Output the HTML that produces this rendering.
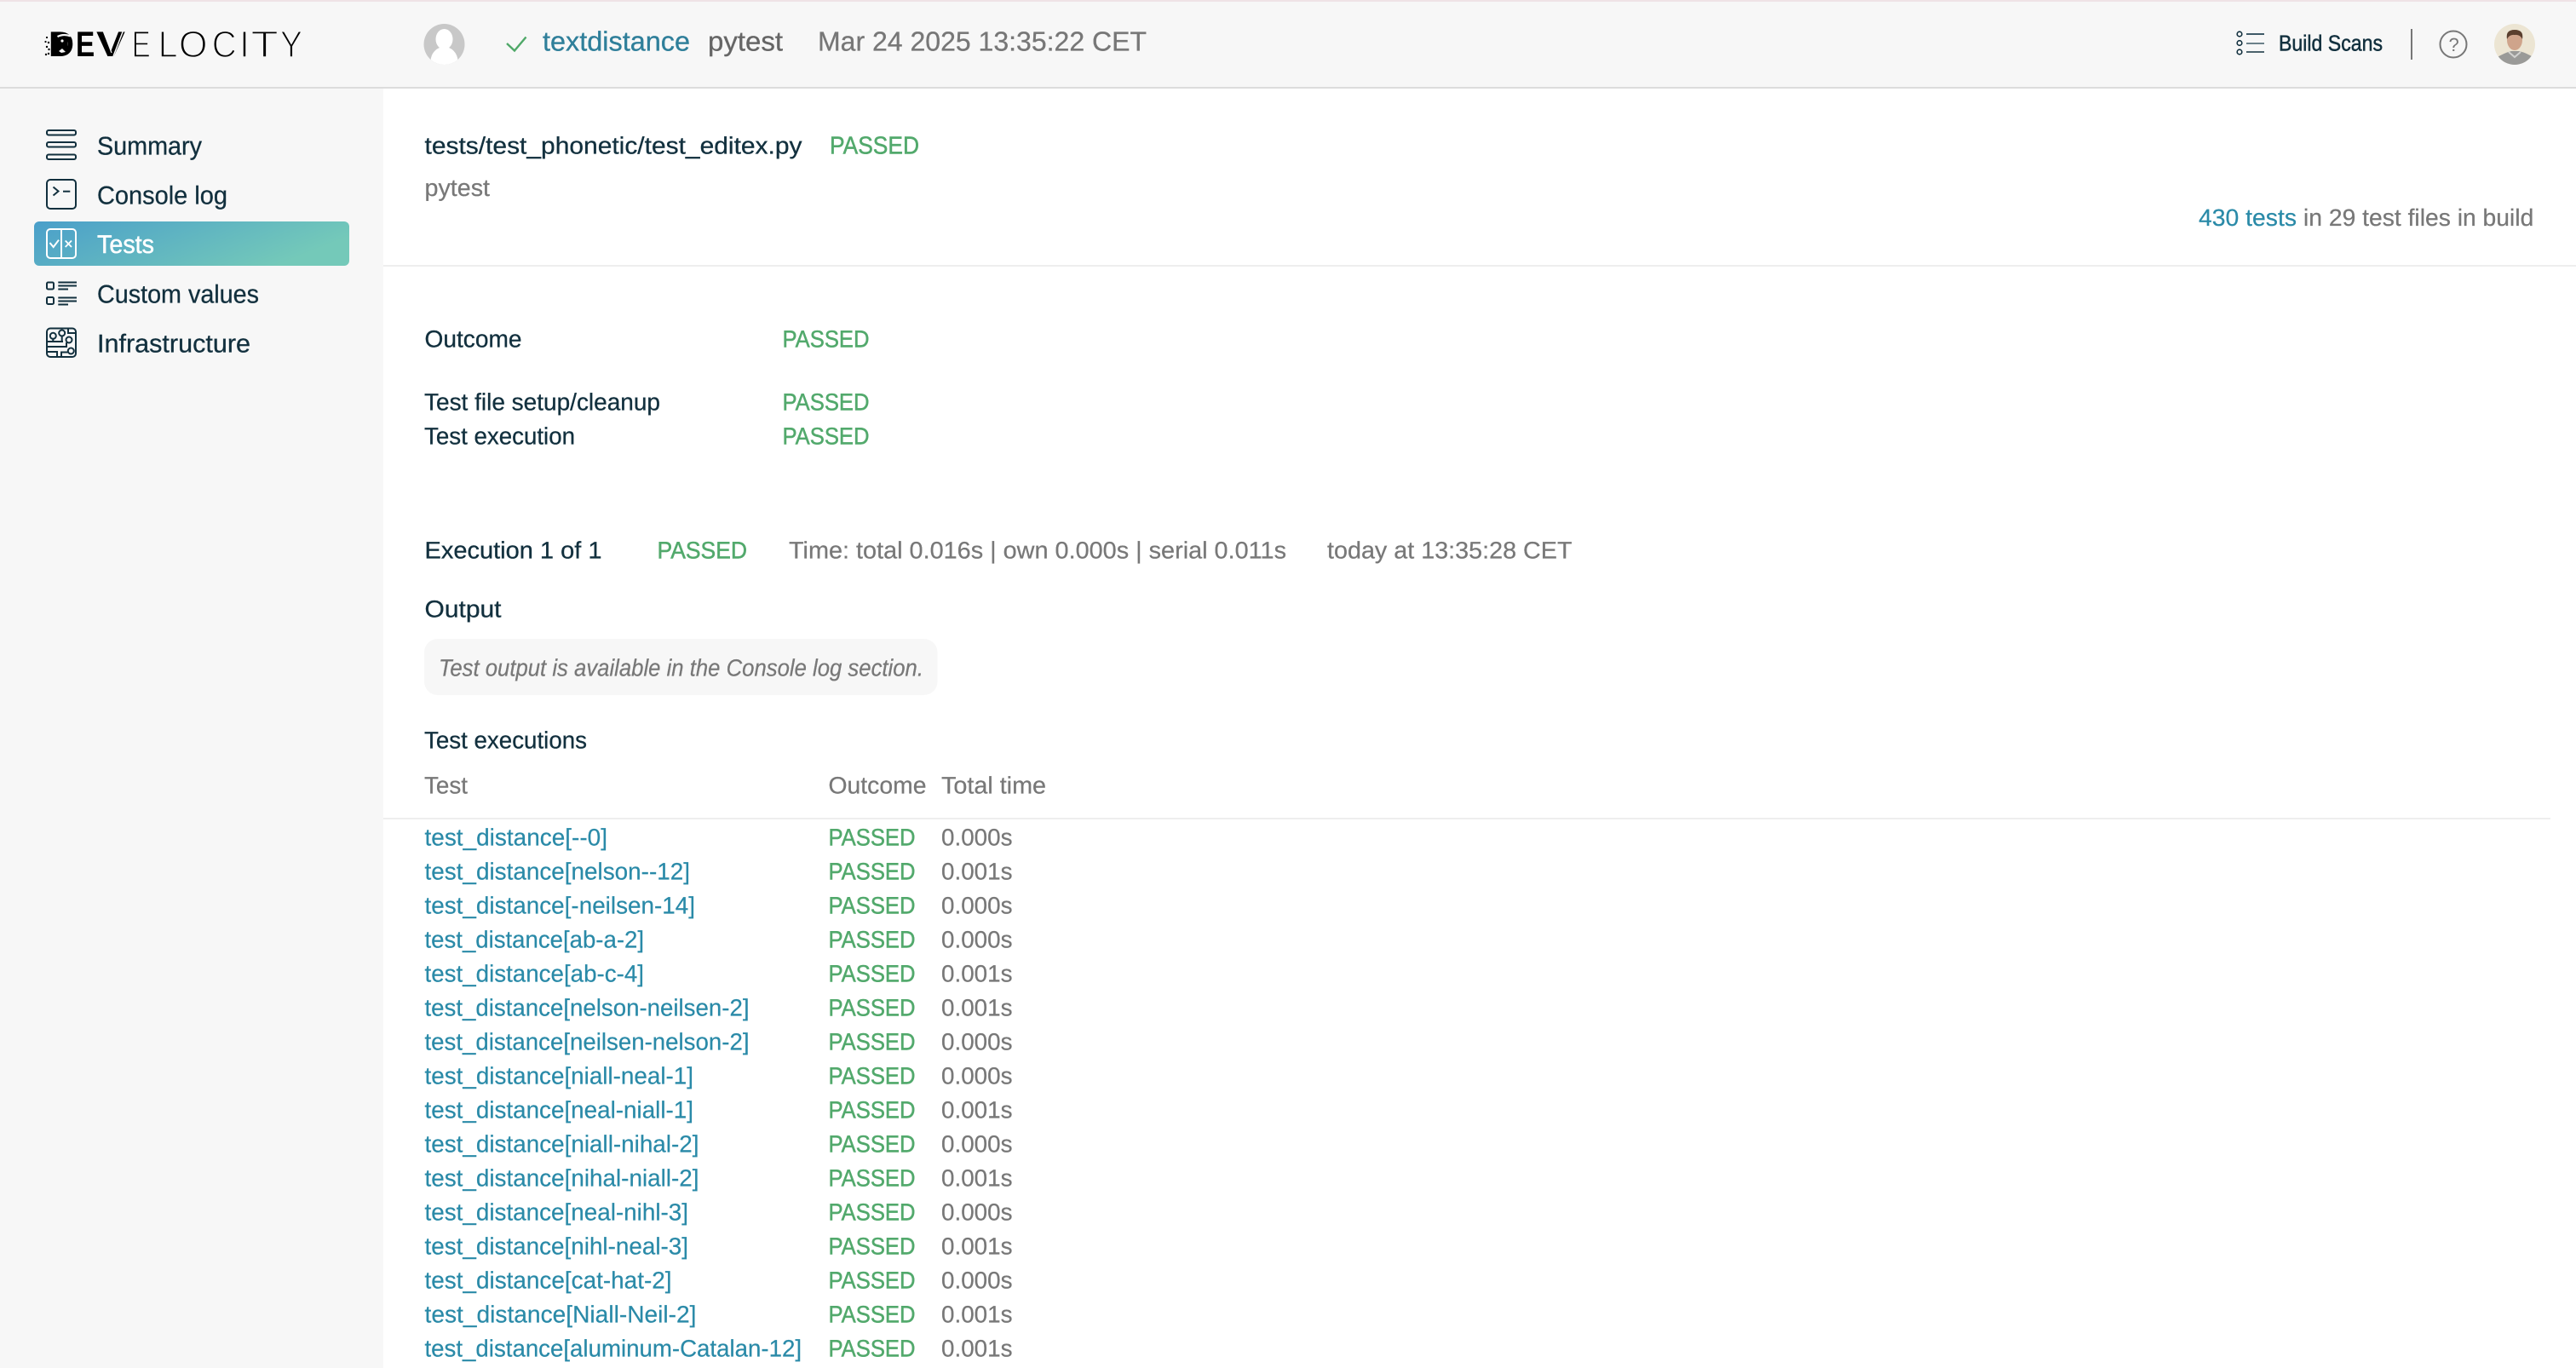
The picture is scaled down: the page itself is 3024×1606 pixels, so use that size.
<!DOCTYPE html>
<html lang="en">
<head>
<meta charset="utf-8">
<title>textdistance pytest</title>
<style>
html,body{margin:0;padding:0;width:3024px;height:1606px;overflow:hidden;background:#fff}
svg{display:block;position:absolute;left:0;top:0}
text{font-family:"Liberation Sans",sans-serif;font-size:28px;white-space:pre;text-rendering:geometricPrecision}
.d{fill:#12303e;stroke:#12303e;stroke-width:.3}
.g{fill:#787878;stroke:#787878;stroke-width:.25}
.p{fill:#52a96c;stroke:#52a96c;stroke-width:.5}
.l{fill:#2a8aa8;stroke:#2a8aa8;stroke-width:.22}
.s{fill:#12303e;stroke:#12303e;stroke-width:.3;font-size:30px}
.h{font-size:32px;stroke-width:.3}
.thin{font-size:44px;fill:#000;stroke:#f7f7f7;stroke-width:1.6}
.b{font-size:41.6px;font-weight:bold;fill:#000}
.ic{fill:none;stroke:#12303e;stroke-width:2}
.iw{fill:none;stroke:#fff;stroke-width:2}
</style>
</head>
<body>
<svg width="3024" height="1606" viewBox="0 0 3024 1606" xmlns="http://www.w3.org/2000/svg">
<defs>
<linearGradient id="ga" x1="0" y1="0" x2="1" y2="0.35"><stop offset="0" stop-color="#4a9fca"/><stop offset="1" stop-color="#74c9b9"/></linearGradient>
<clipPath id="av"><circle cx="2952" cy="52" r="24"/></clipPath>
<clipPath id="pv"><circle cx="521.5" cy="52" r="24"/></clipPath>
</defs>

<rect x="0" y="0" width="3024" height="1606" fill="#fff"/>
<rect x="0" y="0" width="450" height="1606" fill="#f7f7f7"/>
<rect x="0" y="0" width="3024" height="103" fill="#f7f7f7"/>
<rect x="0" y="0" width="3024" height="2" fill="#efe3e6"/>
<rect x="0" y="102" width="3024" height="2" fill="#dcdcdc"/>

<!-- logo -->
<rect x="65" y="41" width="14" height="22" fill="#000"/>
<text class="b" transform="translate(57 66)">D</text>
<rect x="50" y="34" width="9" height="34" fill="#f7f7f7"/>
<path d="M67 42 Q75 38 83 41.5 L82.5 43.5 Q75 40.5 68 44Z" fill="#f7f7f7"/>
<path d="M69 60 L73 57 L77 61 L72 62Z" fill="#f7f7f7"/>
<circle cx="73" cy="48" r="1.6" fill="#f7f7f7"/>
<g fill="#000"><circle cx="55" cy="44" r="1.1"/><circle cx="53.5" cy="49" r="1.1"/><circle cx="57" cy="50" r="1.2"/><circle cx="55" cy="55" r="1.2"/><circle cx="57.5" cy="58" r="1.2"/><circle cx="54" cy="64" r="1.2"/><circle cx="57" cy="63" r="1.2"/></g>
<text class="b" transform="translate(89 66) scale(.8 1)">E</text>
<text class="b" x="113" y="66" textLength="34" lengthAdjust="spacingAndGlyphs">V</text>
<path d="M133 66 L145 35" stroke="#f7f7f7" stroke-width="1.5" fill="none"/>
<path d="M121 36 L131 62" stroke="#f7f7f7" stroke-width="1.2" fill="none"/>
<text class="thin" transform="translate(154.6 67) scale(.756 1)">E</text>
<text class="thin" transform="translate(185.6 67) scale(.94 1)">L</text>
<text class="thin" transform="translate(209.9 67) scale(.985 1)">O</text>
<text class="thin" transform="translate(248.7 67) scale(.91 1)">C</text>
<text class="thin" transform="translate(280.9 67)">I</text>
<text class="thin" transform="translate(294.4 67) scale(1.21 1)">T</text>
<text class="thin" transform="translate(328.8 67) scale(.9 1)">Y</text>

<!-- header -->
<circle cx="521.5" cy="52" r="24" fill="#c8c8c8"/>
<g clip-path="url(#pv)" fill="#fff"><ellipse cx="521.5" cy="46" rx="10" ry="12"/><ellipse cx="521.5" cy="72" rx="16" ry="17"/></g>
<path d="M595 51 L604 59.5 L617.5 43.5" fill="none" stroke="#4fa868" stroke-width="2.4"/>
<text class="h" x="637" y="59.3" fill="#2f7f9a" stroke="#2f7f9a" textLength="173" lengthAdjust="spacingAndGlyphs">textdistance</text>
<text class="h" x="831" y="59.3" fill="#666" stroke="#666" textLength="88" lengthAdjust="spacingAndGlyphs">pytest</text>
<text class="h" x="960" y="59.3" fill="#777" stroke="#777" textLength="386" lengthAdjust="spacingAndGlyphs">Mar 24 2025 13:35:22 CET</text>

<g fill="none" stroke="#12303e" stroke-width="1.6"><circle cx="2629" cy="40" r="2.8"/><circle cx="2629" cy="50.5" r="2.8"/><circle cx="2629" cy="61" r="2.8"/></g>
<path d="M2637 40H2658" stroke="#3f5a67" stroke-width="2"/><path d="M2637 51H2658" stroke="#3f5a67" stroke-width="1.5"/><path d="M2637 61H2658" stroke="#12303e" stroke-width="1.5"/>
<text x="2675" y="59.3" style="font-size:26px;stroke-width:.5" fill="#12303e" stroke="#12303e" textLength="122" lengthAdjust="spacingAndGlyphs">Build Scans</text>
<rect x="2830" y="34" width="2" height="36" fill="#777"/>
<circle cx="2880" cy="52" r="15.5" fill="none" stroke="#777" stroke-width="2"/>
<text x="2874.5" y="60" style="font-size:22px" fill="#777">?</text>
<circle cx="2952" cy="52" r="24" fill="#ece5d3"/>
<g clip-path="url(#av)">
<path d="M2928 80 L2930 68 Q2940 62 2948 60 L2957 60 Q2966 62 2975 68 L2977 80Z" fill="#9a9a98"/>
<ellipse cx="2952" cy="47" rx="9" ry="12" fill="#cfa48b"/>
<path d="M2943 46 Q2941 35 2952 35 Q2963 35 2961 46 Q2958 40 2952 41 Q2946 40 2943 46Z" fill="#5a3f2e"/>
<path d="M2945 61 L2952 67 L2959 61" fill="none" stroke="#d2d2d0" stroke-width="2"/>
</g>

<!-- sidebar -->
<g class="ic">
<rect x="55" y="153" width="34" height="5.5" rx="2"/>
<rect x="55" y="167" width="34" height="5.5" rx="2"/>
<rect x="55" y="181.5" width="34" height="5.5" rx="2"/>
<rect x="55" y="211" width="34" height="34" rx="4"/>
<path d="M62.5 219.5 L68.5 224.5 L62.5 229.5"/>
<path d="M74 224.7H82.3"/>
<rect x="55" y="331.5" width="8" height="8" rx="1.5"/>
<rect x="55" y="349" width="8" height="8" rx="1.5"/>
<path d="M68.3 331.5H90M68.3 335.5H90M68.3 339.5H80M68.3 349.5H90M68.3 353.5H90M68.3 357.5H80"/>
<rect x="55" y="385.5" width="34" height="33.5" rx="4"/>
<circle cx="62.3" cy="394.3" r="3.5"/><circle cx="72.7" cy="391" r="3.5"/><circle cx="81" cy="399" r="3.5"/><circle cx="83.3" cy="412" r="3.5"/>
<path d="M55 401H74M55 407H78V402M55 413H67V419M72 419V413.5H80M62.3 398V401M72.7 394.5V401M80 386V391H89"/>
</g>
<text class="s" x="114" y="181.7" textLength="123" lengthAdjust="spacingAndGlyphs">Summary</text>
<text class="s" x="114" y="239.3" textLength="153" lengthAdjust="spacingAndGlyphs">Console log</text>
<rect x="40" y="260" width="370" height="52" rx="6" fill="url(#ga)"/>
<g class="iw">
<rect x="55" y="269" width="34" height="34" rx="4"/>
<path d="M72 269V303"/>
<path d="M58.5 285 L62.7 290 L69 281.7"/>
<path d="M76.7 282.5 L84 290M84 282.5 L76.7 290" stroke-width="1.8"/>
</g>
<text x="114" y="297.2" style="font-size:30px;fill:#fff;stroke:#fff;stroke-width:.5" textLength="67" lengthAdjust="spacingAndGlyphs">Tests</text>
<text class="s" x="114" y="355.3" textLength="190" lengthAdjust="spacingAndGlyphs">Custom values</text>
<text class="s" x="114" y="413.3" textLength="180" lengthAdjust="spacingAndGlyphs">Infrastructure</text>

<!-- title -->
<text class="d" x="498.5" y="180.7" textLength="443" lengthAdjust="spacingAndGlyphs">tests/test_phonetic/test_editex.py</text>
<text class="p" x="974" y="180.5" style="font-size:29px" textLength="105" lengthAdjust="spacingAndGlyphs">PASSED</text>
<text class="g" x="498.5" y="230" textLength="76.5" lengthAdjust="spacingAndGlyphs">pytest</text>
<text class="l" x="2581" y="265" textLength="115" lengthAdjust="spacingAndGlyphs">430 tests</text>
<text class="g" x="2704" y="265" textLength="270.3" lengthAdjust="spacingAndGlyphs">in 29 test files in build</text>
<rect x="450" y="311" width="2574" height="2" fill="#eeeeee"/>

<text class="d" x="498.5" y="407.3" textLength="114" lengthAdjust="spacingAndGlyphs">Outcome</text>
<text class="p" x="918.5" y="407.3" textLength="102" lengthAdjust="spacingAndGlyphs">PASSED</text>
<text class="d" x="498" y="481.3" textLength="277" lengthAdjust="spacingAndGlyphs">Test file setup/cleanup</text>
<text class="p" x="918.5" y="481.3" textLength="102" lengthAdjust="spacingAndGlyphs">PASSED</text>
<text class="d" x="498" y="521.3" textLength="177" lengthAdjust="spacingAndGlyphs">Test execution</text>
<text class="p" x="918.5" y="521.3" textLength="102" lengthAdjust="spacingAndGlyphs">PASSED</text>

<text class="d" x="498.5" y="655.3" textLength="208" lengthAdjust="spacingAndGlyphs">Execution 1 of 1</text>
<text class="p" x="771.5" y="655.3" textLength="105.5" lengthAdjust="spacingAndGlyphs">PASSED</text>
<text class="g" x="926" y="655.3" textLength="584" lengthAdjust="spacingAndGlyphs">Time: total 0.016s | own 0.000s | serial 0.011s</text>
<text class="g" x="1558" y="655.3" textLength="287.5" lengthAdjust="spacingAndGlyphs">today at 13:35:28 CET</text>

<text class="d" x="498.5" y="724.3" textLength="90" lengthAdjust="spacingAndGlyphs">Output</text>
<rect x="498" y="750" width="602.5" height="66" rx="16" fill="#f7f7f7"/>
<text class="g" x="515" y="793.5" style="font-style:italic" textLength="569" lengthAdjust="spacingAndGlyphs">Test output is available in the Console log section.</text>
<text class="d" x="498" y="878.7" textLength="191" lengthAdjust="spacingAndGlyphs">Test executions</text>

<g transform="translate(0 -.5)">
<text class="g" x="498" y="932" textLength="51" lengthAdjust="spacingAndGlyphs">Test</text>
<text class="g" x="972.5" y="932" textLength="115" lengthAdjust="spacingAndGlyphs">Outcome</text>
<text class="g" x="1105" y="932" textLength="123" lengthAdjust="spacingAndGlyphs">Total time</text>
</g>
<rect x="450" y="960" width="2544" height="2" fill="#eeeeee"/>

<!-- rows -->
<g transform="translate(0 -.6)">
<text class="l" x="498.5" y="993" textLength="214.5" lengthAdjust="spacingAndGlyphs">test_distance[--0]</text>
<text class="p" x="972.5" y="993" textLength="102" lengthAdjust="spacingAndGlyphs">PASSED</text>
<text class="g" x="1105" y="993" textLength="83.5" lengthAdjust="spacingAndGlyphs">0.000s</text>

<text class="l" x="498.5" y="1033" textLength="311.5" lengthAdjust="spacingAndGlyphs">test_distance[nelson--12]</text>
<text class="p" x="972.5" y="1033" textLength="102" lengthAdjust="spacingAndGlyphs">PASSED</text>
<text class="g" x="1105" y="1033" textLength="83.5" lengthAdjust="spacingAndGlyphs">0.001s</text>

<text class="l" x="498.5" y="1073" textLength="317.5" lengthAdjust="spacingAndGlyphs">test_distance[-neilsen-14]</text>
<text class="p" x="972.5" y="1073" textLength="102" lengthAdjust="spacingAndGlyphs">PASSED</text>
<text class="g" x="1105" y="1073" textLength="83.5" lengthAdjust="spacingAndGlyphs">0.000s</text>

<text class="l" x="498.5" y="1113" textLength="257.5" lengthAdjust="spacingAndGlyphs">test_distance[ab-a-2]</text>
<text class="p" x="972.5" y="1113" textLength="102" lengthAdjust="spacingAndGlyphs">PASSED</text>
<text class="g" x="1105" y="1113" textLength="83.5" lengthAdjust="spacingAndGlyphs">0.000s</text>

<text class="l" x="498.5" y="1153" textLength="257.5" lengthAdjust="spacingAndGlyphs">test_distance[ab-c-4]</text>
<text class="p" x="972.5" y="1153" textLength="102" lengthAdjust="spacingAndGlyphs">PASSED</text>
<text class="g" x="1105" y="1153" textLength="83.5" lengthAdjust="spacingAndGlyphs">0.001s</text>

<text class="l" x="498.5" y="1193" textLength="381" lengthAdjust="spacingAndGlyphs">test_distance[nelson-neilsen-2]</text>
<text class="p" x="972.5" y="1193" textLength="102" lengthAdjust="spacingAndGlyphs">PASSED</text>
<text class="g" x="1105" y="1193" textLength="83.5" lengthAdjust="spacingAndGlyphs">0.001s</text>

<text class="l" x="498.5" y="1233" textLength="381" lengthAdjust="spacingAndGlyphs">test_distance[neilsen-nelson-2]</text>
<text class="p" x="972.5" y="1233" textLength="102" lengthAdjust="spacingAndGlyphs">PASSED</text>
<text class="g" x="1105" y="1233" textLength="83.5" lengthAdjust="spacingAndGlyphs">0.000s</text>

<text class="l" x="498.5" y="1273" textLength="315.5" lengthAdjust="spacingAndGlyphs">test_distance[niall-neal-1]</text>
<text class="p" x="972.5" y="1273" textLength="102" lengthAdjust="spacingAndGlyphs">PASSED</text>
<text class="g" x="1105" y="1273" textLength="83.5" lengthAdjust="spacingAndGlyphs">0.000s</text>

<text class="l" x="498.5" y="1313" textLength="315.5" lengthAdjust="spacingAndGlyphs">test_distance[neal-niall-1]</text>
<text class="p" x="972.5" y="1313" textLength="102" lengthAdjust="spacingAndGlyphs">PASSED</text>
<text class="g" x="1105" y="1313" textLength="83.5" lengthAdjust="spacingAndGlyphs">0.001s</text>

<text class="l" x="498.5" y="1353" textLength="322" lengthAdjust="spacingAndGlyphs">test_distance[niall-nihal-2]</text>
<text class="p" x="972.5" y="1353" textLength="102" lengthAdjust="spacingAndGlyphs">PASSED</text>
<text class="g" x="1105" y="1353" textLength="83.5" lengthAdjust="spacingAndGlyphs">0.000s</text>

<text class="l" x="498.5" y="1393" textLength="322" lengthAdjust="spacingAndGlyphs">test_distance[nihal-niall-2]</text>
<text class="p" x="972.5" y="1393" textLength="102" lengthAdjust="spacingAndGlyphs">PASSED</text>
<text class="g" x="1105" y="1393" textLength="83.5" lengthAdjust="spacingAndGlyphs">0.001s</text>

<text class="l" x="498.5" y="1433" textLength="309.5" lengthAdjust="spacingAndGlyphs">test_distance[neal-nihl-3]</text>
<text class="p" x="972.5" y="1433" textLength="102" lengthAdjust="spacingAndGlyphs">PASSED</text>
<text class="g" x="1105" y="1433" textLength="83.5" lengthAdjust="spacingAndGlyphs">0.000s</text>

<text class="l" x="498.5" y="1473" textLength="309.5" lengthAdjust="spacingAndGlyphs">test_distance[nihl-neal-3]</text>
<text class="p" x="972.5" y="1473" textLength="102" lengthAdjust="spacingAndGlyphs">PASSED</text>
<text class="g" x="1105" y="1473" textLength="83.5" lengthAdjust="spacingAndGlyphs">0.001s</text>

<text class="l" x="498.5" y="1513" textLength="290" lengthAdjust="spacingAndGlyphs">test_distance[cat-hat-2]</text>
<text class="p" x="972.5" y="1513" textLength="102" lengthAdjust="spacingAndGlyphs">PASSED</text>
<text class="g" x="1105" y="1513" textLength="83.5" lengthAdjust="spacingAndGlyphs">0.000s</text>

<text class="l" x="498.5" y="1553" textLength="319" lengthAdjust="spacingAndGlyphs">test_distance[Niall-Neil-2]</text>
<text class="p" x="972.5" y="1553" textLength="102" lengthAdjust="spacingAndGlyphs">PASSED</text>
<text class="g" x="1105" y="1553" textLength="83.5" lengthAdjust="spacingAndGlyphs">0.001s</text>

<text class="l" x="498.5" y="1593" textLength="442.5" lengthAdjust="spacingAndGlyphs">test_distance[aluminum-Catalan-12]</text>
<text class="p" x="972.5" y="1593" textLength="102" lengthAdjust="spacingAndGlyphs">PASSED</text>
<text class="g" x="1105" y="1593" textLength="83.5" lengthAdjust="spacingAndGlyphs">0.001s</text>
</g>
</svg>
</body>
</html>
